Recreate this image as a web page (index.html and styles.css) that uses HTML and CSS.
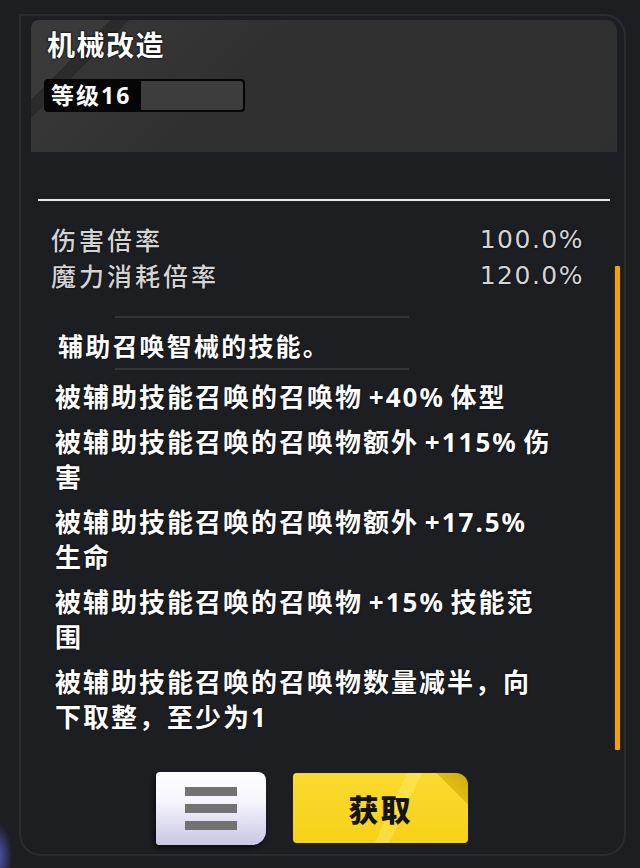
FILE: index.html
```html
<!DOCTYPE html>
<html lang="zh">
<head>
<meta charset="utf-8">
<link rel="stylesheet" href="styles.css">
</head>
<body>
<div class="glow"></div>
<div class="frame">
  <div class="header">
    <div class="title">机械改造</div>
    <div class="level">
      <span class="level-label">等级16</span>
      <span class="level-bar"></span>
    </div>
  </div>
  <div class="rule"></div>
  <div class="body">
    <div class="content">
      <div class="stats">
        <div class="stat"><span>伤害倍率</span><span class="num">100.0%</span></div>
        <div class="stat"><span>魔力消耗倍率</span><span class="num">120.0%</span></div>
      </div>
      <div class="sep"></div>
      <div class="desc">辅助召唤智械的技能。</div>
      <div class="sep"></div>
      <ul class="effects">
        <li>被辅助技能召唤的召唤物 +40% 体型</li>
        <li>被辅助技能召唤的召唤物额外 +115% 伤害</li>
        <li>被辅助技能召唤的召唤物额外 +17.5% 生命</li>
        <li>被辅助技能召唤的召唤物 +15% 技能范围</li>
        <li>被辅助技能召唤的召唤物数量减半，向下取整，至少为1</li>
      </ul>
    </div>
    <div class="scrollbar"></div>
  </div>
  <div class="actions">
    <button class="btn-menu" aria-label="菜单">
      <span class="bar"></span><span class="bar"></span><span class="bar"></span>
    </button>
    <button class="btn-get">获取</button>
  </div>
</div>
</body>
</html>
```

FILE: styles.css
```css
* { box-sizing: border-box; }
html, body { margin: 0; padding: 0; }
body {
  width: 640px;
  height: 868px;
  background: #1d1e22;
  font-family: "Noto Sans", "Noto Sans CJK SC", sans-serif;
  color: #fff;
  overflow: hidden;
  position: relative;
}
.glow {
  position: absolute;
  left: -18px;
  bottom: -24px;
  width: 30px;
  height: 70px;
  background: radial-gradient(closest-side, rgba(90,100,220,0.85), rgba(90,100,220,0));
}
.frame {
  position: relative;
  margin: 14px 14px 0 19px;
  height: 842px;
  border: 2px solid #2b2c31;
  border-radius: 0 22px 22px 22px;
  padding: 4px 4px 0 10px;
  display: flex;
  flex-direction: column;
}
.header {
  height: 132px;
  margin-right: 3px;
  border-radius: 8px 10px 0 0;
  background:
    linear-gradient(135deg, #3a3a3a 0, #3a3a3a 56px, #2b2b2b 56px, #2b2b2b 70px, #363636 70px, #343434 120px, #303030 190px, #2f2f2f 100%);
  padding: 8px 0 0 16px;
}
.title {
  font-size: 28px;
  font-weight: 700;
  line-height: 34px;
  letter-spacing: 1.5px;
  text-shadow: 0 0 2px #000, 0 0 2px #000;
}
.level {
  margin: 17px 0 0 -3px;
  width: 201px;
  height: 33px;
  background: #060606;
  border-radius: 4px;
  display: flex;
  align-items: center;
  padding: 2px;
}
.level-label {
  font-size: 23px;
  font-weight: 700;
  line-height: 29px;
  padding: 0 0 0 5px;
  width: 95px;
  letter-spacing: 2px;
}
.level-bar {
  flex: 1;
  height: 29px;
  background: #3d3d3d;
  border-radius: 0 3px 3px 0;
}
.rule {
  margin: 47px 10px 0 7px;
  height: 2px;
  background: #e8e8e8;
}
.body {
  flex: 1;
  display: flex;
  min-height: 0;
}
.content {
  flex: 1;
  padding: 21px 0 0 0;
}
.stats {
  padding: 0 31px 0 20px;
}
.stat {
  display: flex;
  justify-content: space-between;
  font-size: 25px;
  line-height: 36px;
  color: #d4d4d4;
  font-weight: 500;
  letter-spacing: 3px;
  text-shadow: 0 0 2px #000;
}
.stat .num {
  font-family: "DejaVu Sans", sans-serif;
  font-size: 25px;
  letter-spacing: 1.5px;
}
.sep {
  margin: 0 0 0 84px;
  width: 294px;
  height: 2px;
  background: #34353a;
}
.stats + .sep { margin-top: 22px; }
.desc {
  font-size: 25px;
  font-weight: 700;
  line-height: 44px;
  padding: 6px 0 0 27px;
  letter-spacing: 2.2px;
  text-shadow: 0 0 2px #000;
}
.effects {
  list-style: none;
  margin: 0;
  padding: 10px 0 0 24px;
  width: 526px;
}
.effects li {
  font-size: 26px;
  font-weight: 700;
  line-height: 35px;
  margin-bottom: 10px;
  letter-spacing: 2px;
  word-spacing: -3px;
  text-shadow: 0 0 2px #000;
}
.scrollbar {
  width: 5px;
  margin: 65px 0 22px 0;
  background: #f0a010;
  border-radius: 1px;
  box-shadow: 0 0 2px rgba(120,70,0,0.8);
}
.actions {
  height: 82px;
  display: flex;
  justify-content: center;
  align-items: flex-start;
  gap: 27px;
  margin-left: -27px;
}
.btn-menu {
  width: 110px;
  height: 73px;
  border: none;
  border-radius: 4px 8px 14px 3px;
  background: linear-gradient(#ffffff 0%, #f6f5fc 40%, #c9c6e6 100%);
  box-shadow: -2px 3px 5px rgba(0,0,0,0.6);
  display: flex;
  flex-direction: column;
  align-items: center;
  justify-content: center;
  gap: 8px;
  padding: 0;
}
.btn-menu .bar {
  display: block;
  width: 52px;
  height: 9px;
  background: #727272;
}
.btn-get {
  width: 175px;
  height: 70px;
  border: none;
  border-radius: 4px 12px 4px 4px;
  background:
    linear-gradient(225deg, #d0ac0e 0, #e0bc14 13%, rgba(255,230,60,0) 13%),
    linear-gradient(115deg, rgba(255,255,255,0) 55%, rgba(255,240,120,0.35) 55%, rgba(255,240,120,0.35) 62%, rgba(255,255,255,0) 62%),
    linear-gradient(#fbda30, #f6d218);
  font-family: "Noto Sans CJK SC", sans-serif;
  font-size: 30px;
  font-weight: 900;
  color: #141414;
  padding: 0;
  margin-top: 1px;
  letter-spacing: 2px;
}
```
